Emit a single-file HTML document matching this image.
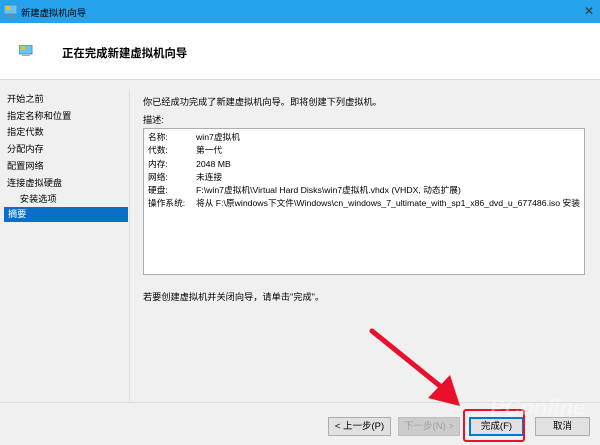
<!DOCTYPE html>
<html><head><meta charset="utf-8"><style>
*{margin:0;padding:0;box-sizing:border-box}
body{width:600px;height:445px;overflow:hidden;background:#f0f0f0;font-family:"Liberation Sans","Noto Sans CJK SC",sans-serif;font-size:9.2px;color:#000;position:relative}
.a{position:absolute;white-space:nowrap}
.btn{position:absolute;height:19px;border:1px solid #adadad;background:#e1e1e1;text-align:center;line-height:17px;font-size:9.5px}
</style></head><body>
<div class="a" style="left:0;top:0;width:600px;height:23px;background:#25a2ec"></div>
<svg class="a" style="left:3px;top:4px" width="16" height="14"><rect x="1" y="1" width="13" height="9" fill="#6fc2ef" stroke="#4a90c8"/><circle cx="5" cy="4" r="2" fill="#f5c400"/><rect x="5" y="11" width="5" height="2" fill="#888"/></svg>
<div class="a" style="left:21px;top:5px;font-size:9.3px">新建虚拟机向导</div>
<div class="a" style="left:584px;top:4px;font-size:12px;color:#333">✕</div>
<div class="a" style="left:0;top:23px;width:600px;height:57px;background:#fff;border-bottom:1px solid #dcdcdc"></div>
<svg class="a" style="left:19px;top:45px" width="14" height="12"><rect x="0" y="0" width="13" height="9" fill="#6fc2ef" stroke="#4a90c8"/><circle cx="4" cy="3" r="2" fill="#f5c400"/><rect x="3" y="10" width="8" height="1" fill="#aaa"/></svg>
<div class="a" style="left:62px;top:45px;font-size:11.4px;font-weight:bold">正在完成新建虚拟机向导</div>
<div class="a" style="left:129px;top:89px;width:1px;height:312px;background:#dcdcdc"></div>
<div class="a" style="left:7px;top:91px;line-height:16.7px">开始之前<br>指定名称和位置<br>指定代数<br>分配内存<br>配置网络<br>连接虚拟硬盘<br>&nbsp;&nbsp;&nbsp;&nbsp;&nbsp;安装选项</div>
<div class="a" style="left:4px;top:207px;width:124px;height:15px;background:#0a6fc6;color:#fff;padding-left:4px;line-height:15px">摘要</div>
<div class="a" style="left:143px;top:94px">你已经成功完成了新建虚拟机向导。即将创建下列虚拟机。</div>
<div class="a" style="left:143px;top:112px">描述:</div>
<div class="a" style="left:143px;top:128px;width:442px;height:147px;background:#fff;border:1px solid #adadad"></div>
<div class="a" style="left:148px;top:131px;line-height:13.3px;font-size:8.7px">名称:<br>代数:<br>内存:<br>网络:<br>硬盘:<br>操作系统:</div>
<div class="a" style="left:196px;top:131px;line-height:13.3px;font-size:8.7px">win7虚拟机<br>第一代<br>2048 MB<br>未连接<br>F:\win7虚拟机\Virtual Hard Disks\win7虚拟机.vhdx (VHDX, 动态扩展)<br>将从 F:\原windows下文件\Windows\cn_windows_7_ultimate_with_sp1_x86_dvd_u_677486.iso 安装</div>
<div class="a" style="left:143px;top:289px">若要创建虚拟机并关闭向导，请单击"完成"。</div>
<div class="a" style="left:0;top:402px;width:600px;height:1px;background:#dcdcdc"></div>
<div class="btn" style="left:328px;top:417px;width:63px">&lt; 上一步(P)</div>
<div class="btn" style="left:398px;top:417px;width:62px;color:#a0a0a0;border-color:#bfbfbf;background:#ccc">下一步(N) &gt;</div>
<div class="btn" style="left:469px;top:417px;width:55px;border:2px solid #0078d7;line-height:15px">完成(F)</div>
<div class="btn" style="left:535px;top:417px;width:55px">取消</div>
<div class="a" style="left:463px;top:409px;width:62px;height:33px;border:2px solid #e8102a;border-radius:3px"></div>
<svg class="a" style="left:360px;top:320px" width="110" height="95"><line x1="12" y1="11" x2="85" y2="70" stroke="#e8102a" stroke-width="5" stroke-linecap="round"/><polygon points="100,86 68,78 90,55" fill="#e8102a"/></svg>
<div class="a" style="left:490px;top:395px;font-size:22px;font-weight:bold;color:rgba(255,255,255,0.35);font-style:italic">PConline</div>
</body></html>
